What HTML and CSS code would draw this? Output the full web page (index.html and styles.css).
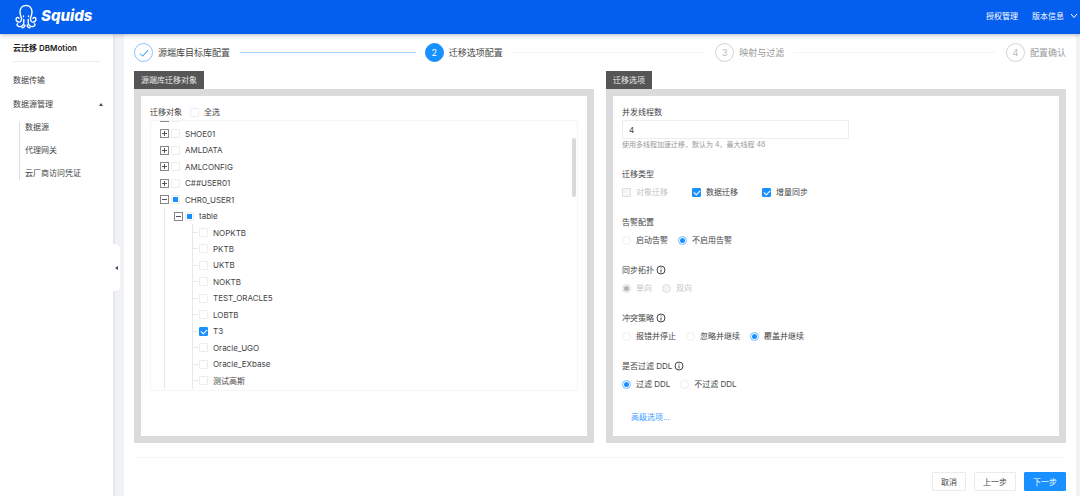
FILE: index.html
```html
<!DOCTYPE html>
<html lang="zh-CN">
<head>
    <meta charset="UTF-8">
    <meta name="viewport" content="width=device-width, initial-scale=1.0">
    <title>云迁移 DBMotion</title>
    <link rel="stylesheet" href="styles.css">
</head>
<body>
    <header class="topbar">
        <a class="brand" href="#">
            <svg class="brand-icon" viewBox="0 0 24 25" fill="none" stroke="currentColor" stroke-width="1.400" stroke-linecap="round" stroke-linejoin="round">
                <path d="M7.500 14.500c0-1.500-1.500-3-1.500-6.500C6 4 8.500 1.500 12 1.500S18 4 18 8c0 3.500-1.500 5-1.500 6.500"/>
                <path d="M7.500 14.500c.3 2.500-1.300 4-3.200 3.500-2-.5-2.800-2.500-1.800-4 .7-1 2.200-.8 2.500.3"/>
                <path d="M16.500 14.500c-.3 2.500 1.300 4 3.200 3.500 2-.5 2.800-2.500 1.800-4-.7-1-2.200-.8-2.500.3"/>
                <path d="M9.800 15.500v3c0 2.800-2.300 4.500-4.800 4-2-.4-2.500-2-1.500-2.800"/>
                <path d="M14.200 15.500v3c0 2.800 2.300 4.500 4.800 4 2-.4 2.500-2 1.500-2.800"/>
                <path d="M10.800 21c0 1.500-1 2.700-2.800 2.700M13.200 21c0 1.500 1 2.700 2.800 2.700"/>
                <path d="M9.500 12v.5M14.500 12v.5"/>
            </svg>
            <span class="brand-name">Squids</span>
        </a>
        <nav class="topnav">
            <a href="#">授权管理</a>
            <a href="#">版本信息
                <svg class="chevron" viewBox="0 0 8 6" fill="none" stroke="currentColor"><path d="M1 1l3 3.500L7 1"/></svg>
            </a>
        </nav>
    </header>

    <div class="layout">
        <aside class="sidebar">
            <h1 class="sidebar-title">云迁移 DBMotion</h1>
            <nav class="menu">
                <a class="menu-item" href="#">数据传输</a>
                <a class="menu-item" href="#">数据源管理 <span class="arrow-up"></span></a>
                <div class="submenu">
                    <a href="#">数据源</a>
                    <a href="#">代理网关</a>
                    <a href="#">云厂商访问凭证</a>
                </div>
            </nav>
            <button class="collapse" type="button" aria-label="收起"><span class="arrow-left"></span></button>
        </aside>

        <main class="content">
            <ol class="steps">
                <li class="step done">
                    <span class="step-dot"><svg viewBox="0 0 10 10" fill="none" stroke="currentColor"><path d="M1 5.500l2.700 2.700L9 2"/></svg></span>
                    <span class="step-text">源端库目标库配置</span>
                </li>
                <li class="step active"><span class="step-dot">2</span><span class="step-text">迁移选项配置</span></li>
                <li class="step"><span class="step-dot">3</span><span class="step-text">映射与过滤</span></li>
                <li class="step"><span class="step-dot">4</span><span class="step-text">配置确认</span></li>
            </ol>

            <div class="panels">
                <section class="panel">
                    <h2 class="panel-tab">源端库迁移对象</h2>
                    <div class="panel-body">
                        <div class="tree-head">
                            <span>迁移对象</span>
                            <label class="option"><input type="checkbox">全选</label>
                        </div>
                        <div class="tree-box">
                            <ul class="tree">
                                <li class="node"><button class="switch" type="button" aria-label="展开"></button><label class="option"><input type="checkbox"></label></li>
                                <li class="node"><button class="switch" type="button" aria-label="展开"></button><label class="option"><input type="checkbox">SHOE01</label></li>
                                <li class="node"><button class="switch" type="button" aria-label="展开"></button><label class="option"><input type="checkbox">AMLDATA</label></li>
                                <li class="node"><button class="switch" type="button" aria-label="展开"></button><label class="option"><input type="checkbox">AMLCONFIG</label></li>
                                <li class="node"><button class="switch" type="button" aria-label="展开"></button><label class="option"><input type="checkbox">C##USER01</label></li>
                                <li class="node"><button class="switch open" type="button" aria-label="收起"></button><label class="option"><input class="partial" type="checkbox">CHR0_USER1</label></li>
                                <li class="node"><span class="guide"></span><button class="switch open" type="button" aria-label="收起"></button><label class="option"><input class="partial" type="checkbox">table</label></li>
                                <li class="node"><span class="guide"></span><span class="guide leaf"></span><label class="option"><input type="checkbox">NOPKTB</label></li>
                                <li class="node"><span class="guide"></span><span class="guide leaf"></span><label class="option"><input type="checkbox">PKTB</label></li>
                                <li class="node"><span class="guide"></span><span class="guide leaf"></span><label class="option"><input type="checkbox">UKTB</label></li>
                                <li class="node"><span class="guide"></span><span class="guide leaf"></span><label class="option"><input type="checkbox">NOKTB</label></li>
                                <li class="node"><span class="guide"></span><span class="guide leaf"></span><label class="option"><input type="checkbox">TEST_ORACLE5</label></li>
                                <li class="node"><span class="guide"></span><span class="guide leaf"></span><label class="option"><input type="checkbox">LOBTB</label></li>
                                <li class="node"><span class="guide"></span><span class="guide leaf"></span><label class="option"><input type="checkbox" checked>T3</label></li>
                                <li class="node"><span class="guide"></span><span class="guide leaf"></span><label class="option"><input type="checkbox">Oracle_UGO</label></li>
                                <li class="node"><span class="guide"></span><span class="guide leaf"></span><label class="option"><input type="checkbox">Oracle_EXbase</label></li>
                                <li class="node"><span class="guide"></span><span class="guide leaf"></span><label class="option"><input type="checkbox">测试高斯</label></li>
                            </ul>
                            <span class="scrollbar"></span>
                        </div>
                    </div>
                </section>

                <section class="panel">
                    <h2 class="panel-tab">迁移选项</h2>
                    <form class="panel-body">
                        <div class="field">
                            <label class="field-label" for="threads">并发线程数</label>
                            <input class="text-input" id="threads" type="text" value="4">
                            <p class="hint">使用多线程加速迁移，默认为 4，最大线程 48</p>
                        </div>
                        <fieldset class="field">
                            <legend class="field-label">迁移类型</legend>
                            <div class="options wide">
                                <label class="option disabled"><input type="checkbox" disabled>对象迁移</label>
                                <label class="option"><input type="checkbox" checked>数据迁移</label>
                                <label class="option"><input type="checkbox" checked>增量同步</label>
                            </div>
                        </fieldset>
                        <fieldset class="field">
                            <legend class="field-label">告警配置</legend>
                            <div class="options">
                                <label class="option"><input type="radio" name="alarm">启动告警</label>
                                <label class="option"><input type="radio" name="alarm" checked>不启用告警</label>
                            </div>
                        </fieldset>
                        <fieldset class="field">
                            <legend class="field-label">同步拓扑
                                <svg class="info" viewBox="0 0 10 10" fill="none" stroke="currentColor"><circle cx="5" cy="5" r="4"/><path d="M5 4.500v3M5 2.500v1"/></svg>
                            </legend>
                            <div class="options">
                                <label class="option disabled"><input type="radio" name="topology" checked disabled>单向</label>
                                <label class="option disabled"><input type="radio" name="topology" disabled>双向</label>
                            </div>
                        </fieldset>
                        <fieldset class="field">
                            <legend class="field-label">冲突策略
                                <svg class="info" viewBox="0 0 10 10" fill="none" stroke="currentColor"><circle cx="5" cy="5" r="4"/><path d="M5 4.500v3M5 2.500v1"/></svg>
                            </legend>
                            <div class="options">
                                <label class="option"><input type="radio" name="conflict">报错并停止</label>
                                <label class="option"><input type="radio" name="conflict">忽略并继续</label>
                                <label class="option"><input type="radio" name="conflict" checked>覆盖并继续</label>
                            </div>
                        </fieldset>
                        <fieldset class="field">
                            <legend class="field-label">是否过滤 DDL
                                <svg class="info" viewBox="0 0 10 10" fill="none" stroke="currentColor"><circle cx="5" cy="5" r="4"/><path d="M5 4.500v3M5 2.500v1"/></svg>
                            </legend>
                            <div class="options">
                                <label class="option"><input type="radio" name="ddl" checked>过滤 DDL</label>
                                <label class="option"><input type="radio" name="ddl">不过滤 DDL</label>
                            </div>
                        </fieldset>
                        <a class="advanced" href="#">高级选项...</a>
                    </form>
                </section>
            </div>

            <footer class="actions">
                <button class="btn" type="button">取消</button>
                <button class="btn" type="button">上一步</button>
                <button class="btn primary" type="button">下一步</button>
            </footer>
        </main>
    </div>
</body>
</html>
```

FILE: styles.css
```css
* {
    margin: 0;
    padding: 0;
    box-sizing: border-box;
}

body {
    min-height: 100vh;
    display: flex;
    flex-direction: column;
    background: #f0f2f5;
    color: #444;
    font-family: Inter, "Noto Sans CJK SC", sans-serif;
    font-size: 8px;
    line-height: 16px;
}

a {
    color: inherit;
    text-decoration: none;
}

ul,
ol {
    list-style: none;
}

button,
input {
    font: inherit;
    color: inherit;
}

/* header */
.topbar {
    position: relative;
    z-index: 2;
    display: flex;
    justify-content: space-between;
    align-items: center;
    height: 34px;
    padding: 0 2px 2px 14px;
    background: #045eee;
    color: #fff;
    box-shadow: 0 1px 4px rgba(0, 21, 41, 0.3);
}

.brand {
    display: flex;
    align-items: center;
    gap: 3px;
}

.brand-icon {
    width: 24px;
    height: 25px;
}

.brand-name {
    font-size: 15px;
    font-weight: 800;
    font-style: italic;
}

.topnav {
    display: flex;
    gap: 14px;
}

.topnav a {
    display: flex;
    align-items: center;
    gap: 6px;
}

.chevron {
    width: 8px;
    height: 6px;
}

.layout {
    flex: 1;
    display: flex;
    gap: 11px;
    padding-right: 4px;
}

/* sidebar */
.sidebar {
    position: relative;
    flex: none;
    width: 113px;
    padding: 0 13px;
    background: #fff;
    box-shadow: 1px 0 3px rgba(0, 21, 41, 0.08);
}

.sidebar-title {
    padding: 6px 0 5px;
    border-bottom: 1px solid #ececec;
    font-size: 8px;
    font-weight: 600;
    color: #222;
}

.menu {
    padding-top: 6px;
}

.menu-item {
    display: flex;
    justify-content: space-between;
    align-items: center;
    height: 24px;
}

.arrow-up {
    margin-right: -3px;
    border: 2px solid transparent;
    border-top: 0;
    border-bottom: 3px solid #444c63;
}

.submenu {
    position: relative;
    padding-left: 12px;
}

.submenu::before {
    content: "";
    position: absolute;
    left: 6px;
    top: 6px;
    bottom: 5px;
    width: 1px;
    background: #ddd;
}

.submenu a {
    display: block;
    line-height: 23px;
}

.collapse {
    position: absolute;
    right: -7px;
    top: 210px;
    display: flex;
    justify-content: center;
    align-items: center;
    width: 8px;
    height: 47px;
    border: 0;
    border-radius: 0 5px 5px 0;
    background: #fff;
}

.arrow-left {
    border: 2px solid transparent;
    border-left: 0;
    border-right: 3px solid #444c63;
}

/* content */
.content {
    flex: 1;
    padding: 9px 10px 6px;
    background: #fff;
}

.steps {
    display: flex;
    margin-bottom: 9px;
    font-size: 9px;
    color: #999;
}

.step {
    flex: 1;
    display: flex;
    align-items: center;
    gap: 5px;
}

.step:last-child {
    flex: none;
}

.step:not(:last-child)::after {
    content: "";
    flex: 1;
    height: 1px;
    margin: 0 9px 0 5px;
    background: #f5f5f5;
}

.step-dot {
    display: flex;
    justify-content: center;
    align-items: center;
    width: 19px;
    height: 19px;
    border: 1px solid #d4d4d4;
    border-radius: 50%;
    color: #bbb;
}

.step-dot svg {
    width: 10px;
    height: 10px;
}

.step.done,
.step.active {
    color: #444;
}

.step.done .step-dot {
    border-color: #8cc4ff;
    color: #1890ff;
}

.step.done::after {
    background: #a5d3ff;
}

.step.active .step-dot {
    border-color: #1890ff;
    background: #1890ff;
    color: #fff;
}

.panels {
    display: grid;
    grid-template-columns: 1fr 1fr;
    gap: 12px;
}

.panel {
    display: flex;
    flex-direction: column;
    align-items: flex-start;
}

.panel-tab {
    padding: 1px 7px;
    background: #555;
    color: #e8e8e8;
    font-size: 8px;
    font-weight: 400;
}

.panel-body {
    flex: 1;
    width: 100%;
    padding: 8px 9px;
    border: 7px solid #dbdbdb;
}

/* checkboxes and radios */
.option {
    display: flex;
    align-items: center;
    gap: 5px;
}

.option input {
    flex: none;
    display: grid;
    place-items: center;
    width: 9px;
    height: 9px;
    appearance: none;
    border: 1px solid #ededed;
    border-radius: 1px;
    background: #fff;
}

.option input[type="radio"] {
    border-radius: 50%;
}

.option input:checked {
    border-color: #1890ff;
}

.option input[type="radio"]:checked {
    border-color: #6db8ff;
}

.option input[type="checkbox"]:checked {
    background: #1890ff;
}

.option input[type="checkbox"]:checked::after {
    content: "";
    width: 3px;
    height: 5px;
    margin-bottom: 1px;
    border: solid #fff;
    border-width: 0 1px 1px 0;
    transform: rotate(45deg);
}

.option input[type="radio"]:checked::after,
.option .partial::after {
    content: "";
    width: 5px;
    height: 5px;
    background: #1890ff;
}

.option input[type="radio"]:checked::after {
    border-radius: 50%;
}

.option.disabled {
    color: #c4c4c4;
}

.option.disabled input,
.option.disabled input[type="radio"]:checked {
    border-color: #dedede;
    background: #f5f5f5;
}

.option.disabled input[type="radio"]:checked::after {
    background: #b3b3b3;
}

/* object tree */
.tree-head {
    display: flex;
    gap: 8px;
}

.tree-box {
    position: relative;
    height: 271px;
    overflow: hidden;
    border: 1px solid #f5f5f5;
    border-radius: 2px;
}

.tree {
    display: grid;
    grid-auto-rows: 1fr;
    height: 280px;
    margin-top: -12px;
    padding-left: 9px;
}

.node {
    display: flex;
    align-items: center;
}

.switch {
    width: 9px;
    height: 9px;
    margin-right: 2px;
    border: 1px solid #888;
    background: linear-gradient(#555, #555) center / 5px 1px no-repeat, linear-gradient(#555, #555) center / 1px 5px no-repeat;
}

.switch.open {
    background: linear-gradient(#555, #555) center / 5px 1px no-repeat;
}

.guide {
    align-self: stretch;
    width: 10px;
    margin-left: 4px;
    border-left: 1px solid #e8e8e8;
}

.guide.leaf {
    display: flex;
    align-items: center;
    width: 7px;
    margin-left: 18px;
}

.guide.leaf::before {
    content: "";
    width: 5px;
    height: 1px;
    background: #e8e8e8;
}

.guide:first-child:has(+ .leaf) {
    margin-right: 0;
}

.scrollbar {
    position: absolute;
    right: 1px;
    top: 17px;
    width: 4px;
    height: 59px;
    border-radius: 2px;
    background: #d9d9d9;
}

/* options form */
.field {
    margin-bottom: 12px;
    border: 0;
}

.field-label {
    display: flex;
    align-items: center;
    gap: 2px;
    height: 16px;
}

.info {
    width: 10px;
    height: 10px;
}

.text-input {
    display: block;
    width: 53%;
    height: 19px;
    padding: 0 6px;
    border: 1px solid #ededed;
}

.hint {
    margin-bottom: 15px;
    font-size: 7px;
    line-height: 12px;
    color: #999;
}

.options {
    display: flex;
    gap: 10px;
    height: 20px;
}

.options.wide {
    gap: 24px;
}

.advanced {
    display: inline-block;
    padding: 0 9px;
    line-height: 22px;
    color: #40a0ff;
}

/* footer buttons */
.actions {
    display: flex;
    justify-content: flex-end;
    gap: 8px;
    margin-top: 14px;
    padding-top: 14px;
    border-top: 1px solid #f5f5f5;
}

.btn {
    height: 19px;
    padding: 0 8px;
    border: 1px solid #ebebeb;
    border-radius: 1px;
    background: #fff;
}

.btn.primary {
    border-color: #1890ff;
    background: #1890ff;
    color: #fff;
}
```
